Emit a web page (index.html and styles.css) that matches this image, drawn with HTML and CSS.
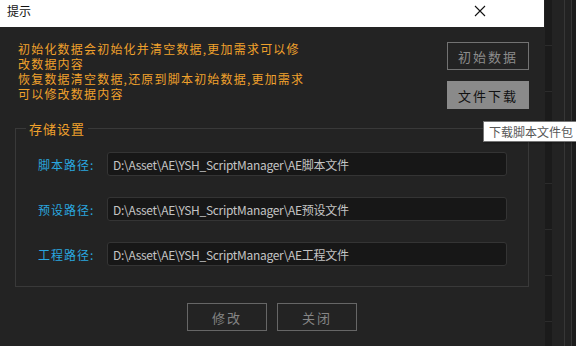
FILE: index.html
```html
<!DOCTYPE html>
<html lang="zh-CN">
    <head>
        <meta charset="utf-8">
        <title>提示</title>
        <link rel="stylesheet" href="styles.css">
    </head>
    <body>
        <div class="screen">
            <div class="dialog">
                <div class="titlebar">
                    <span class="title">提示</span>
                    <span class="close">
                        <svg width="12" height="12" viewBox="0 0 12 12">
                            <path d="M1 1 L11 11 M11 1 L1 11" stroke="#111" stroke-width="1.1" fill="none"/>
                        </svg>
                    </span>
                </div>

                <div class="content">
                    <!-- hint text and the two top buttons -->
                    <div class="top">
                        <div class="hint">
                            <p>初始化数据会初始化并清空数据,更加需求可以修<br>改数据内容</p>
                            <p>恢复数据清空数据,还原到脚本初始数据,更加需求<br>可以修改数据内容</p>
                        </div>
                        <div class="side-buttons">
                            <button class="btn">初始数据</button>
                            <button class="btn btn-fill">文件下载</button>
                        </div>
                    </div>

                    <!-- storage paths -->
                    <fieldset class="group">
                        <legend>存储设置</legend>
                        <div class="row">
                            <label for="script">脚本路径:</label>
                            <input type="text" id="script" value="D:\Asset\AE\YSH_ScriptManager\AE脚本文件">
                        </div>
                        <div class="row">
                            <label for="preset">预设路径:</label>
                            <input type="text" id="preset" value="D:\Asset\AE\YSH_ScriptManager\AE预设文件">
                        </div>
                        <div class="row">
                            <label for="project">工程路径:</label>
                            <input type="text" id="project" value="D:\Asset\AE\YSH_ScriptManager\AE工程文件">
                        </div>
                    </fieldset>

                    <div class="bottom">
                        <button class="btn btn-wide">修改</button>
                        <button class="btn btn-wide">关闭</button>
                    </div>
                </div>
            </div>

            <!-- the app window behind the dialog -->
            <div class="behind">
                <div class="strip-a"></div>
                <div class="strip-track"></div>
                <div class="strip-b"></div>
                <div class="strip-line"></div>
                <div class="strip-c"></div>
                <div class="strip-line"></div>
                <div class="strip-d"></div>
            </div>

            <div class="tooltip">下载脚本文件包</div>
        </div>
    </body>
</html>
```

FILE: styles.css
```css
body {
    margin: 0;
    font-family: "Noto Sans CJK SC", "Microsoft YaHei", sans-serif;
    font-size: 12px;
}
.screen {
    position: relative;
    display: flex;
    width: 576px;
    height: 346px;
    overflow: hidden;
    background-color: #1e1e1e;
}
.dialog {
    width: 544px;
    flex-shrink: 0;
    background-color: #232323;
    display: flex;
    flex-direction: column;
}
.titlebar {
    height: 27px;
    background-color: #fff;
    display: flex;
    justify-content: space-between;
    box-sizing: border-box;
    padding: 3px 0 0 7px;
}
.title {
    color: #111;
    font-size: 12px;
    line-height: 16px;
}
.close {
    width: 46px;
    margin-right: 41px;
    display: flex;
    justify-content: center;
    padding-top: 2px;
}
.content {
    padding: 14px 15px 0 15px;
}
.top {
    display: flex;
    justify-content: space-between;
    align-items: flex-start;
}
.hint {
    width: 320px;
    padding-left: 3px;
    color: #f0a12c;
    letter-spacing: 1.2px;
    line-height: 15px;
    white-space: nowrap;
}
.hint p {
    margin: 0;
}
.side-buttons {
    display: flex;
    flex-direction: column;
    gap: 11px;
    margin-top: 1px;
}
.btn {
    width: 82px;
    height: 28px;
    background-color: #232323;
    border: 1px solid #727272;
    color: #8c8c8c;
    font-family: "Noto Sans CJK SC", sans-serif;
    font-size: 13px;
    letter-spacing: 2px;
    padding: 0;
}
.btn-fill {
    background-color: #8a8a8a;
    border-color: #8a8a8a;
    color: #111;
}
.btn-wide {
    width: 80px;
    color: #858585;
    border-color: #666;
}
.group {
    margin: 10px 0 0 0;
    padding: 14px 21px 20px 10px;
    border: 1px solid #393939;
}
.group legend {
    color: #f0a12c;
    font-size: 13px;
    letter-spacing: 1px;
    padding: 0 3px;
}
.row {
    display: flex;
    align-items: center;
    padding-left: 12px;
    margin-bottom: 21px;
}
.row:last-child {
    margin-bottom: 0;
}
.row label {
    width: 69px;
    color: #2aa6df;
    letter-spacing: 1px;
    font-size: 12px;
}
.row input {
    width: 400px;
    height: 24px;
    box-sizing: border-box;
    background-color: #171717;
    border: 1px solid #343434;
    border-radius: 3px;
    color: #c4c4c4;
    font-family: "Noto Sans CJK SC", sans-serif;
    font-size: 12px;
    letter-spacing: -0.3px;
    padding: 0 5px;
}
.bottom {
    display: flex;
    justify-content: center;
    gap: 10px;
    margin-top: 16px;
}

/* window behind the dialog */
.behind {
    flex: 1;
    display: flex;
}
.strip-a {
    width: 1px;
    background-color: #232323;
}
.strip-track {
    width: 7px;
    background-color: #1b1b1b;
    background-image: repeating-linear-gradient(to bottom, transparent 0, transparent 45px, #2c2c2c 45px, #2c2c2c 46px);
}
.strip-b {
    width: 12px;
    background-color: #232323;
}
.strip-line {
    width: 1px;
    background-color: #363636;
}
.strip-c {
    width: 6px;
    background-color: #222;
}
.strip-d {
    flex: 1;
    background-color: #1c1c1c;
}

.tooltip {
    position: absolute;
    left: 483px;
    top: 121px;
    height: 21px;
    box-sizing: border-box;
    padding: 0 6px 0 5px;
    background-color: #fff;
    border: 1px solid #767676;
    color: #575757;
    font-size: 12px;
    line-height: 19px;
    white-space: nowrap;
    box-shadow: 1px 1px 2px rgba(0, 0, 0, 0.3);
}
```
